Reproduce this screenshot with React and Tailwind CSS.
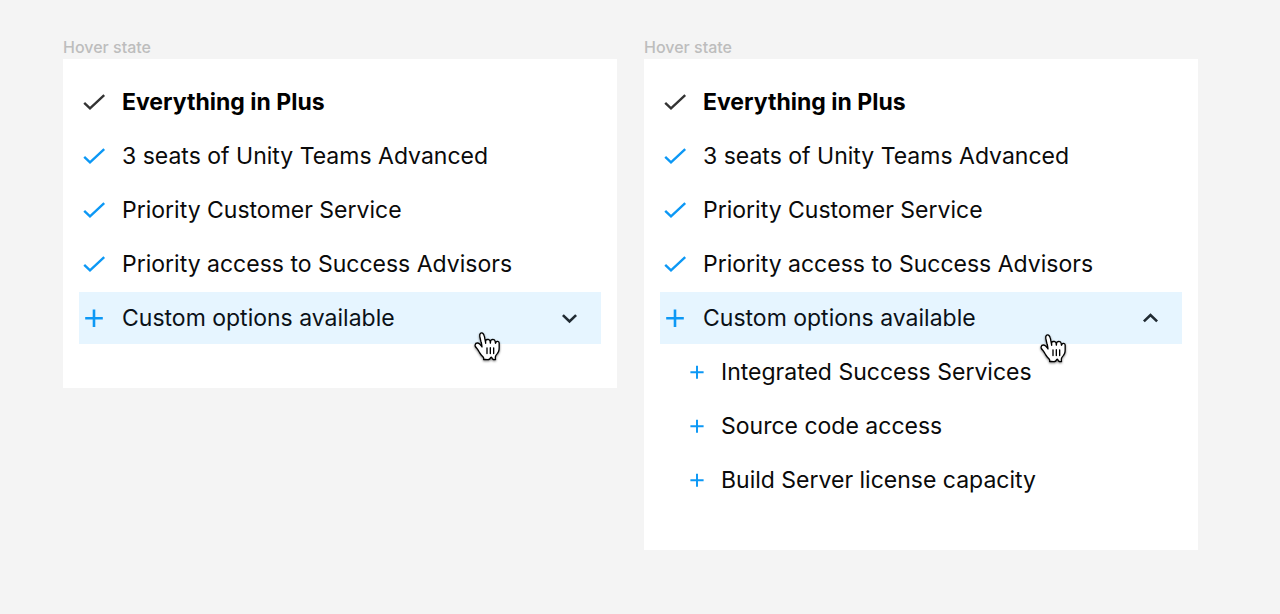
import { useId, useState } from "react";

const features = [
  { text: "3 seats of Unity Teams Advanced" },
  { text: "Priority Customer Service" },
  { text: "Priority access to Success Advisors" },
];

const customOptions = [
  "Integrated Success Services",
  "Source code access",
  "Build Server license capacity",
];

function CheckIcon({ className }) {
  return (
    <svg viewBox="0 0 24 24" className={`size-6 shrink-0 ${className}`} fill="none" stroke="currentColor" strokeWidth="2.4" aria-hidden="true">
      <path d="M2.2 12.9 8 18.4 22.2 5.2" />
    </svg>
  );
}

function PlusIcon({ className }) {
  return (
    <svg viewBox="0 0 24 24" className={`shrink-0 text-[#0c98f5] ${className}`} fill="none" stroke="currentColor" strokeWidth="2.6" aria-hidden="true">
      <path d="M3.2 12.3H20.8M12 3.5V21.1" />
    </svg>
  );
}

function Chevron({ open }) {
  return (
    <svg viewBox="0 0 24 24" className="ml-auto size-6 shrink-0 text-[#212b33]" fill="none" stroke="currentColor" strokeWidth="2.6" aria-hidden="true">
      <path d={open ? "M5.9 15.4 12.5 9 19.1 15.4" : "M5.9 9.1 12.5 15.5 19.1 9.1"} />
    </svg>
  );
}

function HandCursor({ className }) {
  return (
    <svg viewBox="7.8 7.2 18 18" className={`pointer-events-none absolute size-[30px] overflow-visible drop-shadow-[0_1px_1px_rgba(0,0,0,0.5)] ${className}`} aria-hidden="true">
      <path
        d="M11.3 20.4c-.3-.4-.6-1.1-1.2-2-.3-.5-1.2-1.5-1.5-1.9-.2-.4-.2-.6-.1-1 .1-.6.7-1.1 1.4-1.1.5 0 1 .4 1.4.7.2.2.5.6.7.8.2.2.2.3.4.5.2.3.3.5.2.1-.1-.5-.2-1.3-.4-2.1-.1-.6-.2-.7-.3-1.1-.1-.5-.2-.8-.3-1.3-.1-.3-.2-1.1-.3-1.5-.1-.5-.1-1.4.3-1.8.3-.3.9-.4 1.3-.2.5.3.8 1 .9 1.3.2.5.4 1.2.5 2 .2 1 .5 2.5.5 2.8 0-.4-.1-1.1 0-1.5.1-.3.3-.7.7-.8.3-.1.6-.1.9-.1.3.1.6.3.8.5.4.6.4 1.9.4 1.8.1-.4.1-1.2.3-1.6.1-.2.5-.4.7-.5.3-.1.7-.1 1 0 .2 0 .6.3.7.5.2.3.3 1.3.4 1.7 0 .1.1-.4.3-.7.4-.6 1.8-.8 1.9.6v2.7c0 .5-.1 1.6-.3 2.1-.1.3-.4.8-.7 1.3 0 0-1.1 1.2-1.2 1.8-.1.6-.1.6-.1 1 0 .4.1.9.1.9s-.8.1-1.2 0c-.4-.1-.9-.8-1-1.1-.2-.3-.5-.3-.7 0-.2.4-.7 1.1-1.1 1.1-.7.1-2.1 0-3.1 0 0 0 .2-1-.2-1.4-.3-.3-.8-.8-1.1-1.1z"
        fill="white"
        stroke="black"
        strokeWidth="0.8"
        strokeLinejoin="round"
      />
      <path d="M19.6 20.7v-3.4M17.6 20.7v-3.5M15.6 17.3v3.4" fill="none" stroke="black" strokeWidth="0.8" strokeLinecap="round" />
    </svg>
  );
}

function PlanPanel({ initiallyOpen, cursorClass }) {
  const [open, setOpen] = useState(initiallyOpen);
  const listId = useId();
  return (
    <section>
      <h2 className="text-base leading-6 font-medium text-[#bdbdbd]">Hover state</h2>
      <div className="flex flex-col gap-0.5 bg-white px-4 pt-[17px] pb-11 text-[23px] text-[#0a0a0a]">
        <ul className="flex flex-col gap-0.5">
          <li className="flex h-[52px] items-center gap-4 px-[3px] font-bold text-black">
            <CheckIcon className="text-[#333333]" />
            Everything in Plus
          </li>
          {features.map(({ text }) => (
            <li key={text} className="flex h-[52px] items-center gap-4 px-[3px]">
              <CheckIcon className="text-[#0c98f5]" />
              {text}
            </li>
          ))}
        </ul>
        <div className="relative">
          <button
            type="button"
            aria-expanded={open}
            aria-controls={listId}
            onClick={() => setOpen(!open)}
            className="flex h-[52px] w-full cursor-pointer items-center gap-4 bg-[#e6f5ff] pr-5 pl-[3px] text-left text-[#0b1118]"
          >
            <PlusIcon className="size-6" />
            Custom options available
            <Chevron open={open} />
          </button>
          <HandCursor className={cursorClass} />
        </div>
        <ul id={listId} className={open ? "flex flex-col gap-0.5" : "hidden"}>
          {customOptions.map((text) => (
            <li key={text} className="flex h-[52px] items-center gap-[15px] pl-7">
              <PlusIcon className="size-[18px]" />
              {text}
            </li>
          ))}
        </ul>
      </div>
    </section>
  );
}

export default function App() {
  return (
    <main className="grid min-h-screen grid-cols-2 items-start gap-[27px] bg-[#f4f4f4] pt-[35px] pr-[82px] pb-16 pl-[63px] font-['Inter',sans-serif]">
      <PlanPanel initiallyOpen={false} cursorClass="top-[39px] left-[395px]" />
      <PlanPanel initiallyOpen cursorClass="top-[41px] left-[380px]" />
    </main>
  );
}
